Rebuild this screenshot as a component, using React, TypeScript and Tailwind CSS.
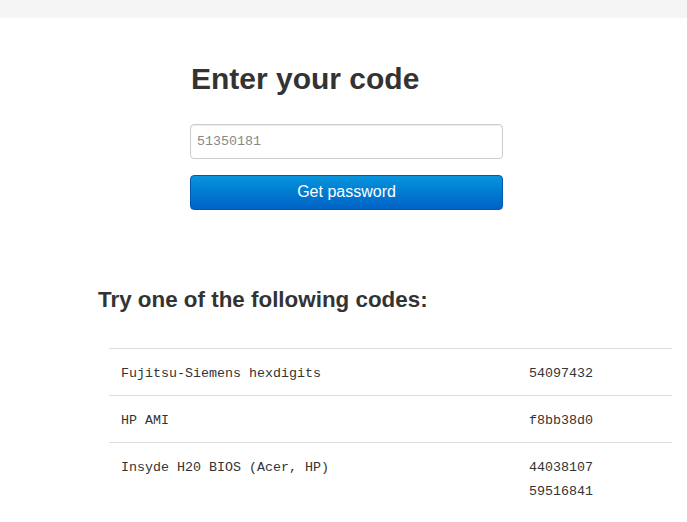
import React from 'react';

const rows: { name: string; codes: string[] }[] = [
  { name: 'Fujitsu-Siemens hexdigits', codes: ['54097432'] },
  { name: 'HP AMI', codes: ['f8bb38d0'] },
  { name: 'Insyde H20 BIOS (Acer, HP)', codes: ['44038107', '59516841'] },
];

export default function App() {
  return (
    <div className="min-h-screen bg-white font-['Liberation_Sans',Arial,sans-serif] text-[#333]">
      <div className="h-[18px] bg-[#f5f5f5]" />

      {/* Form */}
      <div className="ml-[190px] w-[313px] pt-[41px]">
        <h1 className="ml-px text-[30px] font-bold leading-[40px]">Enter your code</h1>
        <form className="mt-[25px] flex flex-col" onSubmit={(e) => e.preventDefault()}>
          <input
            type="text"
            placeholder="51350181"
            className="h-[35px] w-full rounded-[4px] border border-[#ccc] px-[6px] font-['Liberation_Mono',monospace] text-[13.33px] text-[#555] shadow-[inset_0_1px_1px_rgba(0,0,0,0.075)] placeholder:text-[#888] focus:outline-none"
          />
          <button
            type="submit"
            className="mt-4 h-[35px] w-full rounded-[4px] border border-[#0058b0] bg-gradient-to-b from-[#0a94dc] to-[#0062c6] pb-[2px] text-[16px] text-white"
          >
            Get password
          </button>
        </form>
      </div>

      {/* Codes */}
      <h2 className="ml-[98px] mt-[75px] text-[22.4px] font-bold leading-[30px]">Try one of the following codes:</h2>
      <table className="ml-[109px] mt-[33px] w-[563px] border-collapse font-['Liberation_Mono',monospace] text-[13.33px] text-[#333]">
        <tbody>
          {rows.map((r) => (
            <tr key={r.name} className="border-t border-[#ddd] align-top">
              <td className="w-[420px] px-3 pt-[13px] pb-[9px] leading-6">{r.name}</td>
              <td className="pt-[13px] pb-[9px] leading-6">
                {r.codes.map((c) => (
                  <div key={c}>{c}</div>
                ))}
              </td>
            </tr>
          ))}
        </tbody>
      </table>
    </div>
  );
}
